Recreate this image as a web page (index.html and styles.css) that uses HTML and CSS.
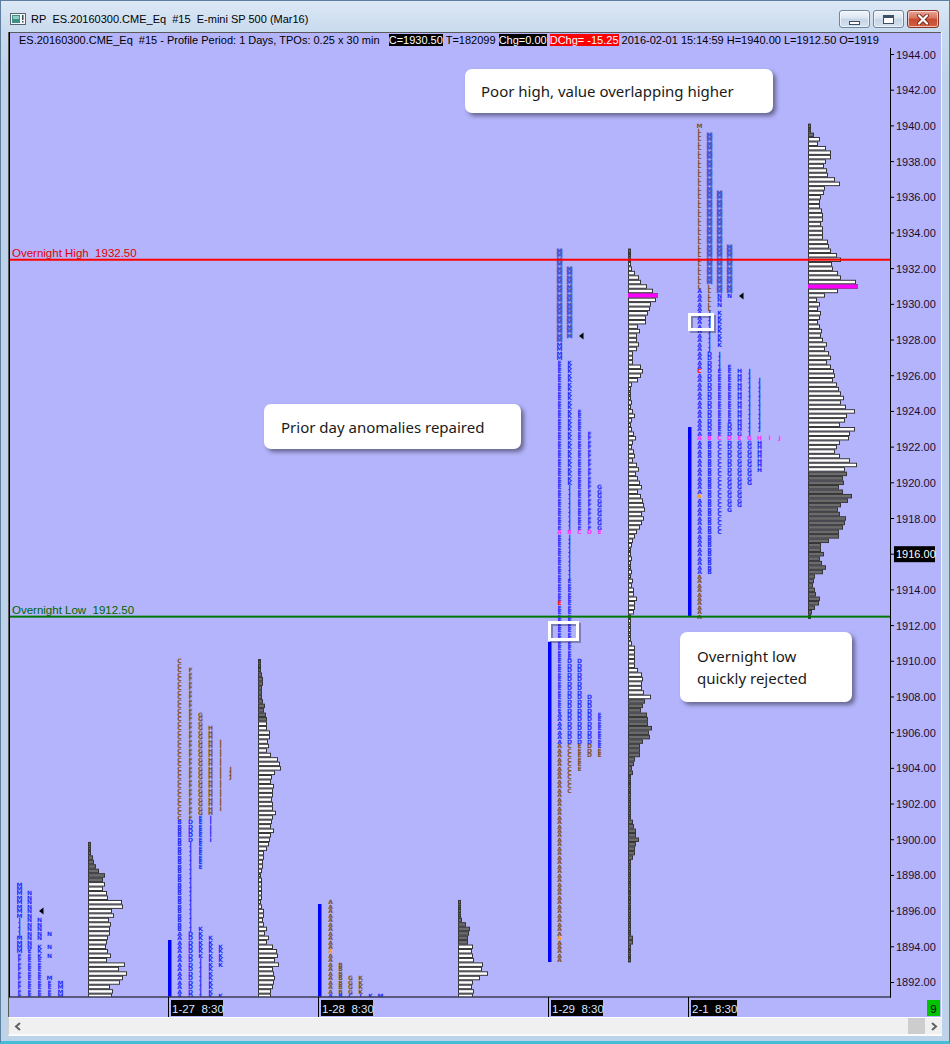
FILE: index.html
```html
<!DOCTYPE html>
<html>
<head>
<meta charset="utf-8">
<title>RP ES.20160300.CME_Eq</title>
<link rel="stylesheet" href="styles.css">
</head>
<body>
<div class="window">
  <div class="titlebar">
    <svg class="appicon" width="16" height="12" viewBox="0 0 16 12">
      <rect x="0.5" y="0.5" width="15" height="11" fill="#f4f6f8" stroke="#5a6470"/>
      <rect x="2" y="2" width="8" height="8" fill="#3f8f86"/>
      <rect x="3" y="3" width="6" height="3" fill="#8fd0c6"/>
      <rect x="12" y="2" width="1.5" height="5" fill="#404850"/>
      <rect x="12" y="8" width="1.5" height="1.5" fill="#404850"/>
    </svg>
    <span class="title">RP&nbsp; ES.20160300.CME_Eq&nbsp; #15&nbsp; E-mini SP 500 (Mar16)</span>
    <div class="controls">
      <div class="btn"><span class="g-min"></span></div>
      <div class="btn"><span class="g-max"></span></div>
      <div class="btn close">
        <svg width="14" height="11" viewBox="0 0 14 11"><path d="M3 1.5 L11 9.5 M11 1.5 L3 9.5" stroke="#7a2a1e" stroke-width="4" stroke-linecap="round"/><path d="M3 1.5 L11 9.5 M11 1.5 L3 9.5" stroke="#ffffff" stroke-width="2.2" stroke-linecap="round"/></svg>
      </div>
    </div>
  </div>
  <div class="client">
    <div class="chart">
      <svg id="plot" class="plot" width="934" height="985" viewBox="0 0 934 985"></svg>
      <svg id="over" class="over" width="934" height="985" viewBox="0 0 934 985"></svg>
      <div class="info"><span>ES.20160300.CME_Eq&nbsp; #15 - Profile Period: 1 Days, TPOs: 0.25 x 30 min&nbsp;&nbsp; </span><span class="hb">C=1930.50</span> T=182099 <span class="hb">Chg=0.00</span> <span class="hr">DChg= -15.25</span> 2016-02-01 15:14:59 H=1940.00 L=1912.50 O=1919</div>
      <div class="note note-high">Poor high, value overlapping higher</div>
      <div class="note note-prior">Prior day anomalies repaired</div>
      <div class="note note-low">Overnight low<br>quickly rejected</div>
    </div>
    <div class="hscroll">
      <div class="sbtn"><svg width="8" height="9" viewBox="0 0 8 9"><path d="M6 1 L2 4.5 L6 8" fill="none" stroke="#606060" stroke-width="2"/></svg></div>
      <div class="track"><div class="thumb"></div></div>
      <div class="sbtn"><svg width="8" height="9" viewBox="0 0 8 9"><path d="M2 1 L6 4.5 L2 8" fill="none" stroke="#606060" stroke-width="2"/></svg></div>
    </div>
  </div>
  <div class="bottomframe"></div>
</div>
<script src="chart.js"></script>
</body>
</html>
```

FILE: styles.css
```css
* { box-sizing: border-box; }
html, body { margin: 0; padding: 0; }
body {
  width: 950px;
  height: 1044px;
  overflow: hidden;
  background: #bcd3ea;
  font-family: "Liberation Sans", Arial, sans-serif;
}
.window {
  width: 950px;
  height: 1044px;
  display: flex;
  flex-direction: column;
  border: 1px solid #5f7f9f;
  border-bottom: 3px solid #45bdd9;
  background: linear-gradient(180deg, #dce8f5 0px, #c8daee 32px, #bcd3ea 80px, #bcd3ea 100%);
}
.titlebar {
  height: 31px;
  flex: none;
  display: flex;
  align-items: flex-start;
  padding-left: 9px;
}
.appicon { margin-top: 12px; flex: none; }
.title {
  margin-top: 12px;
  margin-left: 5px;
  font-size: 11px;
  color: #000;
  white-space: nowrap;
}
.controls {
  margin-left: auto;
  margin-right: 10px;
  margin-top: 9px;
  display: flex;
  gap: 3px;
}
.btn {
  width: 31px;
  height: 18px;
  border: 1px solid #6f859e;
  border-radius: 3px;
  background: linear-gradient(180deg, #f1f5fa 0%, #dbe5f1 45%, #c6d5e7 50%, #d3e0ee 100%);
  display: flex;
  align-items: center;
  justify-content: center;
  box-shadow: inset 0 0 0 1px rgba(255,255,255,0.6);
}
.btn.close {
  width: 32px;
  border-color: #8a3426;
  background: linear-gradient(180deg, #eaa596 0%, #d9735d 45%, #c64a31 50%, #d4603f 100%);
}
.g-min {
  width: 11px;
  height: 4px;
  margin-top: 7px;
  border: 1px solid #3d4d62;
  background: #fff;
}
.g-max {
  width: 11px;
  height: 9px;
  border: 1px solid #3d4d62;
  border-top-width: 3px;
  background: #fff;
}
.client {
  flex: none;
  height: 1004px;
  margin: 0 7px 0 7px;
  display: flex;
  flex-direction: column;
}
.chart {
  position: relative;
  height: 985px;
  flex: none;
  background: #b4b4fc;
}
.plot { display: block; }
.over {
  position: absolute;
  left: 0;
  top: 0;
  pointer-events: none;
}
.info {
  position: absolute;
  left: 11px;
  top: 1px;
  width: 869px;
  height: 15px;
  line-height: 15px;
  font-size: 11px;
  color: #000;
  white-space: nowrap;
  background: #b4b4fc;
}
.info .hb { background: #000; color: #fff; }
.info .hr { background: #ff0000; color: #fff; }
.note {
  position: absolute;
  background: #fff;
  border-radius: 7px;
  box-shadow: 3px 3px 4px rgba(40,40,60,0.55);
  font-family: "Noto Sans", "Open Sans", sans-serif;
  font-size: 15px;
  color: #1a1a1a;
  display: flex;
  align-items: center;
}
.note-high { left: 457px; top: 37px; width: 308px; height: 44px; padding-left: 16px; }
.note-prior { left: 256px; top: 372px; width: 257px; height: 45px; padding-left: 17px; }
.note-low { left: 672px; top: 600px; width: 172px; height: 70px; padding-left: 17px; line-height: 22px; }
.hscroll {
  height: 19px;
  flex: none;
  display: flex;
  background: #f0f0f0;
  border-top: 1px solid #ffffff;
  border-bottom: 2px solid #fbfbfb;
  border-left: 1px solid #d0d0d0;
}
.sbtn {
  width: 17px;
  flex: none;
  display: flex;
  align-items: center;
  justify-content: center;
}
.track { flex: 1; display: flex; justify-content: flex-end; }
.thumb { width: 17px; height: 100%; background: #cdcdcd; }
.bottomframe { flex: 1; }

/* chart drawing */
.bg { fill: #b4b4fc; }
.edge { fill: #5a5a5a; }
.edge2 { fill: #000; }
.edgew { fill: #f4f4ff; }
.bar { fill: #ffffff; stroke: #363636; stroke-width: 1; }
.bar.dk { fill: #6c6c6c; }
.mag { fill: #ff00ff; }
.tl {
  font-family: "DejaVu Sans", sans-serif;
  font-size: 6px;
  font-weight: 700;
  text-anchor: middle;
}
.cbl { fill: #2030ff; }
.cbr { fill: #7b5026; }
.crd { fill: #ff0000; }
.cpk { fill: #ff30ff; }
.cor { fill: #ff9a00; }
.ch { fill: #6a5648; stroke: #3050ff; stroke-width: 0.45; }
.ib { fill: #0000ff; }
.line-red { fill: #ff0000; }
.line-green { fill: #007800; }
.axis { fill: #000; }
.lvl {
  font-family: "Liberation Sans", Arial, sans-serif;
  font-size: 11.5px;
  white-space: pre;
}
.lvl-red { fill: #e00000; }
.lvl-green { fill: #006400; }
.plabel {
  font-family: "Liberation Sans", Arial, sans-serif;
  font-size: 11px;
  fill: #1c0c2c;
}
.plabel.inv { fill: #ffffff; }
.boxblack { fill: #000; }
.tlabel {
  font-family: "Liberation Sans", Arial, sans-serif;
  font-size: 11.5px;
  fill: #dce4ff;
  white-space: pre;
}
.boxgreen { fill: #00c400; }
.nine {
  font-family: "Liberation Sans", Arial, sans-serif;
  font-size: 11.5px;
  fill: #000;
  text-anchor: middle;
}
.hilite { fill: none; stroke: #ffffff; stroke-width: 3; }
.hilite-sh { fill: none; stroke: rgba(30,30,60,0.35); stroke-width: 3; }
.tri { fill: #000; }
```

FILE: chart.js
```js
(function () {
  var NS = 'http://www.w3.org/2000/svg';
  var svg = document.getElementById('plot');
  var over = document.getElementById('over');
  var K = 17.846, OX = 8, OY = 32;
  function Y(p) { return 54.5 - OY + (1944 - p) * K; }
  function X(px) { return px - OX; }
  function el(tag, a, par) {
    var e = document.createElementNS(NS, tag);
    for (var k in a) { e.setAttribute(k, a[k]); }
    (par || svg).appendChild(e);
    return e;
  }
  function txt(x, y, s, cls, par) {
    var t = el('text', { x: x, y: y, 'class': cls }, par);
    t.textContent = s;
    return t;
  }

  var defs = el('defs', {});
  var cp = el('clipPath', { id: 'pc' }, defs);
  el('rect', { x: 2, y: 0, width: 880, height: 964.5 }, cp);

  el('rect', { x: 0, y: 0, width: 934, height: 985, 'class': 'bg' });
  var plot = el('g', { 'clip-path': 'url(#pc)' });
  var gH = el('g', {}, plot), gB = el('g', {}, plot), gL = el('g', {}, plot);

  function hist(px, top, ws, dark, mag) {
    for (var i = 0; i < ws.length; i++) {
      var p = top - i * 0.25, y = Y(p);
      el('rect', { x: X(px) + 0.5, y: (y - 1.75).toFixed(2), width: ws[i], height: 3.5,
        'class': dark(p) ? 'bar dk' : 'bar' }, gH);
    }
    if (mag) {
      el('rect', { x: X(px), y: (Y(mag[0]) - 2).toFixed(2), width: mag[1], height: 4, 'class': 'mag' }, gH);
    }
  }

  /* TPO letters: collected per column, written as one text element per column, one tspan per letter */
  var COLS = {}, ORDER = [], OVL = [];
  function put(px, q, ch, c) {
    if (!COLS[px]) { COLS[px] = {}; ORDER.push(px); }
    COLS[px][q] = [ch, c];
  }
  function ov(px, p, ch, c) { OVL.push([px, p, ch, c]); }
  function col(px, segs) {
    for (var s = 0; s < segs.length; s++) {
      var g = segs[s];
      for (var p = g[0]; p >= g[1] - 0.001; p -= 0.25) {
        put(px, Math.round(p * 4) / 4, g[2], g[3]);
      }
    }
  }
  function flush() {
    OVL.forEach(function (o) { put(o[0], o[1], o[2], o[3]); });
    ORDER.forEach(function (px) {
      var t = el('text', { 'class': 'tl' }, gL);
      var keys = Object.keys(COLS[px]).map(Number).sort(function (a, b) { return b - a; });
      keys.forEach(function (q) {
        var v = COLS[px][q];
        var ts = el('tspan', { x: X(px) + 2.5, y: (Y(q) + 2.2).toFixed(2), 'class': v[1] === 'h' ? 'ch' : 'c' + v[1] }, t);
        ts.textContent = v[1] === 'h' ? 'M' : v[0];
      });
    });
  }

  /* ---------- histograms ---------- */
  hist(88, 1899.75, [2,2,2,4,5,7,10,16,14,16,14,18,19,33,34,23,25,20,22,21,21,19,18,17,19,22,18,36,30,38,34,31,21,24,23],
    function (p) { return p >= 1897.75; });
  hist(258, 1910, [2,2,2,3,4,4,3,3,3,4,6,5,7,8,8,8,11,11,9,10,8,12,19,21,22,16,13,12,15,14,14,13,14,14,17,14,13,12,15,12,11,10,8,5,5,4,4,3,2,3,3,3,3,3,2,3,5,5,4,5,8,6,10,8,14,18,19,16,20,14,15,16,15,14,12,12],
    function (p) { return p >= 1906.75; });
  hist(458, 1896.5, [2,2,2,2,3,7,11,10,9,9,14,13,14,15,24,23,29,21,14,13,15,14],
    function (p) { return p >= 1894.25; });
  var d4 = function (p) { return p >= 1932.75 || p <= 1907.75; };
  hist(628, 1933, [2,2,2,2,3,6,10,12,18,24,29,27,22,21,19,17,17,9,11,8,8,10,8,4,4,4,12,14,12,9,3,2,2], d4);
  hist(628, 1924.75, [2,3,2,4,6,3,2,3,5,7,4,3,5,6,4,8,10,7,9,11,13,9,12,14,15,16,13,15,13,11,8,6,4,3,2,2,3], d4);
  hist(628, 1915.5, [2,2,3,2,4,3,5,5,8,6,6,5,2,2,2,2,2,2,3,6,6,6,6,6,9,13,14,13,13,15,22], d4);
  hist(628, 1907.75, [16,14,12,18,19,19,23,20,21,14,11,11,11,6,5,3,4,2,
    2,2,2,2,2,2,2,2,2,
    4,5,7,7,10,7,6,6,4,
    2,2,2,2,2,2,2,2,2,2,2,2,2,2,2,2,2,
    4,4,2,2,2,2], d4, [1930.5, 30]);
  var d5 = function (p) { return p >= 1939.5 || p <= 1920.5; };
  hist(808, 1940, [2,2,5,11,9,17,22,22,17,15,18,19,26,31,16,15,12,11,11,13,14,14,12,14,14,14,19,20,22,28,32,23,24,29,32,47,49,29,16,8,11,9,12,11,9,11,13,
    12,14,18,16,20,22,18,22,25,26,24,28,30,32,35,
    32,37,46,38,36,31,46,41,40,31,28,26,31,41,48,36,
    38,34,35,30,34,43,39,32,29,31,37,36,34,30,30,20,12,12,15,11,13,17,14,6,5,4,6,7,11,10,6,3,2], d5, [1931, 50]);

  /* ---------- letter overrides ---------- */
  ov(557, 1913.25, 'E', 'rd');
  ov(557, 1894.5, 'A', 'or');
  ['A','B','C','D','E'].forEach(function (c, i) { ov(557 + i * 10, 1917.25, c, 'pk'); });
  ov(697, 1926.25, 'C', 'rd');
  ov(697, 1919.25, 'A', 'or');
  ov(328, 1893.75, 'A', 'or');
  ['A','B','C','D','E','G','H','I','J'].forEach(function (c, i) { ov(697 + i * 10, 1922.5, c, 'pk'); });

  /* ---------- TPO letter columns ---------- */
  col(17, [[1897.5,1895.75,'M','bl'],[1895.5,1894.75,'J','bl'],[1894.5,1893.75,'M','bl'],[1893.5,1891.25,'F','bl']]);
  col(27, [[1897,1894,'N','bl'],[1893.75,1891.25,'E','bl']]);
  col(37, [[1895.5,1894.5,'N','bl'],[1894,1893.5,'K','bl'],[1893.25,1891.25,'E','bl']]);
  col(47, [[1894.75,1894.75,'N','bl'],[1894,1894,'N','bl'],[1893.5,1893.5,'N','bl'],[1892.25,1892.25,'M','bl'],[1892,1891.25,'E','bl']]);
  col(58, [[1892,1891.25,'M','bl']]);
  col(177, [[1910,1901.25,'C','br'],[1901,1895,'B','bl'],[1894.75,1891.25,'A','bl']]);
  col(188, [[1909.5,1901.25,'F','br'],[1901,1900,'D','bl'],[1899.75,1895,'J','bl'],[1894.75,1891.25,'D','bl']]);
  col(198, [[1907,1901.5,'G','br'],[1901.25,1898.5,'E','bl'],[1895,1893.5,'K','bl'],[1893.25,1891.25,'J','bl']]);
  col(208, [[1906.25,1901.5,'H','br'],[1901.25,1900,'I','bl'],[1894.5,1891.25,'K','bl']]);
  col(218, [[1905.5,1901.75,'I','br'],[1894,1893,'K','bl'],[1891.25,1891.25,'K','bl']]);
  col(228, [[1904,1903.5,'J','br']]);
  col(328, [[1896.5,1891.5,'A','br'],[1891.25,1891.25,'A','bl']]);
  col(338, [[1893,1891.5,'B','br'],[1891.25,1891.25,'B','bl']]);
  col(348, [[1892.25,1891.5,'G','br'],[1891.25,1891.25,'C','bl']]);
  col(358, [[1892.25,1891.5,'K','br'],[1891.25,1891.25,'I','bl']]);
  col(368, [[1891.25,1891.25,'K','bl']]);
  col(378, [[1891.25,1891.25,'M','bl']]);
  col(557, [[1933,1928,'M','h'],[1927.75,1927,'M','bl'],[1926.75,1907.25,'E','bl'],[1907,1905.5,'A','bl'],[1905.25,1893.25,'A','br']]);
  col(567, [[1932,1928.25,'M','h'],[1926.75,1920,'K','bl'],[1919.75,1914.75,'J','bl'],[1914.5,1910.25,'E','bl'],[1910,1905.5,'D','bl'],[1905.25,1902.75,'C','br']]);
  col(577, [[1924,1917.25,'E','bl'],[1910,1905.5,'D','bl'],[1905.25,1904,'E','br']]);
  col(587, [[1922.75,1917.25,'F','bl'],[1908,1905.5,'D','bl'],[1905.25,1904.75,'D','br']]);
  col(597, [[1919.75,1917.25,'G','bl'],[1907,1905.25,'E','bl'],[1905,1904.75,'E','br']]);
  col(697, [[1940,1940,'M','br'],[1939.75,1931,'L','br'],[1930.75,1915,'A','bl'],[1914.75,1912.5,'A','br']]);
  col(707, [[1939.5,1931.25,'M','h'],[1931,1929.75,'L','br'],[1929.5,1927.5,'J','bl'],[1927.25,1923,'D','bl'],[1922.75,1915,'B','bl']]);
  col(717, [[1936.25,1930.75,'M','h'],[1930.5,1930,'N','bl'],[1929.5,1927.75,'K','bl'],[1927.25,1926.5,'J','bl'],[1926.25,1922.75,'E','bl'],[1922.25,1917.25,'C','bl']]);
  col(727, [[1933.25,1930.75,'M','h'],[1930.5,1930.5,'N','bl'],[1926.5,1923.5,'E','bl'],[1923.25,1920.75,'D','bl'],[1920.5,1918.5,'G','bl']]);
  col(737, [[1926.25,1923,'H','bl'],[1922.75,1918.75,'G','bl']]);
  col(747, [[1926.25,1922.75,'J','bl'],[1922.25,1920,'G','bl']]);
  col(757, [[1925.75,1923,'J','bl'],[1922.25,1920.75,'H','bl']]);
  flush();

  /* ---------- initial balance bars ---------- */
  [[168, 940, 997], [318, 904, 997], [548, 642, 962], [688, 427, 617]].forEach(function (b) {
    el('rect', { x: X(b[0]), y: b[1] - OY, width: 3.5, height: b[2] - b[1], 'class': 'ib' }, gB);
  });

  /* ---------- frame & axes ---------- */
  el('rect', { x: 0, y: 0, width: 1, height: 985, 'class': 'edge' });
  el('rect', { x: 0, y: 0, width: 934, height: 1, 'class': 'edge' });
  el('rect', { x: 1, y: 0, width: 1, height: 965, 'class': 'edge2' });
  el('rect', { x: 933, y: 0, width: 1, height: 985, 'class': 'edgew' });
  el('rect', { x: 1, y: 964.5, width: 882, height: 1, 'class': 'axis' });
  el('rect', { x: 882, y: 16, width: 1, height: 949.5, 'class': 'axis' });

  for (var p = 1944; p >= 1892; p -= 2) {
    var y = Y(p);
    el('rect', { x: 883, y: (y - 0.5).toFixed(2), width: 3, height: 1, 'class': 'axis' });
    if (p === 1916) {
      el('rect', { x: 886, y: (y - 8).toFixed(2), width: 41, height: 16, 'class': 'boxblack' });
      txt(888, (y + 4).toFixed(2), p.toFixed(2), 'plabel inv');
    } else {
      txt(888, (y + 4).toFixed(2), p.toFixed(2), 'plabel');
    }
  }

  [[160, '1-27  8:30', 52], [310, '1-28  8:30', 52], [540, '1-29  8:30', 52], [680, '2-1  8:30', 46]].forEach(function (t) {
    el('rect', { x: t[0], y: 965, width: 1, height: 20, 'class': 'axis' });
    el('rect', { x: t[0] + 3, y: 968, width: t[2], height: 16, 'class': 'boxblack' });
    txt(t[0] + 4, 980.5, t[1], 'tlabel');
  });
  el('rect', { x: 919, y: 968, width: 13, height: 16, 'class': 'boxgreen' });
  txt(925.5, 980.5, '9', 'nine');

  /* ---------- overlay: overnight levels & markers ---------- */
  el('rect', { x: 2, y: (Y(1932.5) - 1).toFixed(2), width: 880, height: 2, 'class': 'line-red' }, over);
  el('rect', { x: 2, y: (Y(1912.5) - 1).toFixed(2), width: 880, height: 2, 'class': 'line-green' }, over);
  txt(4, (Y(1932.5) - 3).toFixed(2), 'Overnight High  1932.50', 'lvl lvl-red', over);
  txt(4, (Y(1912.5) - 3).toFixed(2), 'Overnight Low  1912.50', 'lvl lvl-green', over);
  function tri(px, py) {
    el('polygon', { points: X(px) + ',' + (py - OY) + ' ' + (X(px) + 4.5) + ',' + (py - OY - 3.5) + ' ' + (X(px) + 4.5) + ',' + (py - OY + 3.5), 'class': 'tri' }, over);
  }
  tri(739, 296); tri(579, 336); tri(39, 911);
  function hil(px, py, w, h) {
    el('rect', { x: X(px) + 2, y: py - OY + 2, width: w, height: h, 'class': 'hilite-sh' }, over);
    el('rect', { x: X(px), y: py - OY, width: w, height: h, 'class': 'hilite' }, over);
  }
  hil(689.5, 314.5, 23, 15);
  hil(549.5, 622.5, 28, 17);
})();
```
